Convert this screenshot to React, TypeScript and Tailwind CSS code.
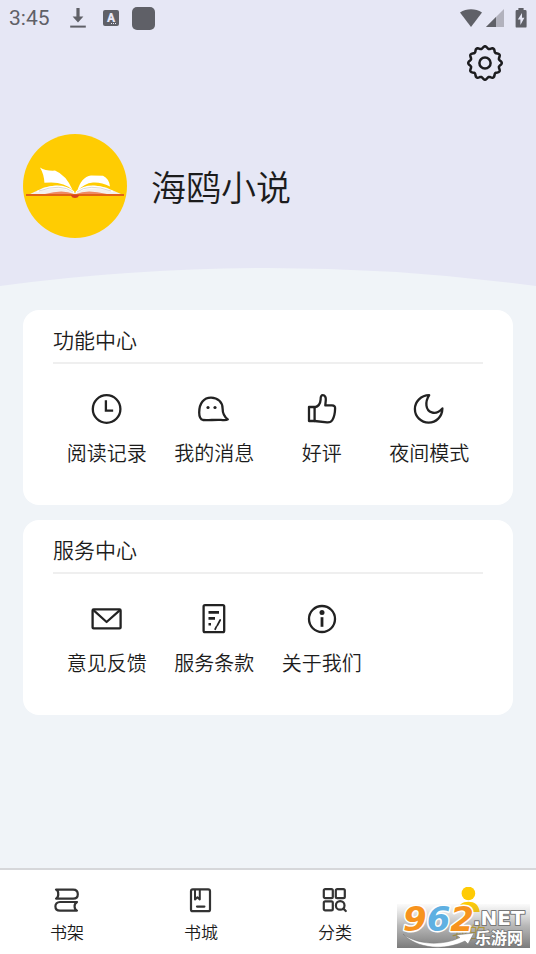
import type { ReactNode } from 'react';

type Item = { label: string; icon: ReactNode };

const iconProps = {
    viewBox: '0 0 32 32',
    fill: 'none',
    stroke: '#222',
    strokeWidth: 2.3,
    strokeLinecap: 'round',
    strokeLinejoin: 'round',
    'aria-hidden': true,
} as const;

const FEATURES: Item[] = [
    {
        label: '阅读记录',
        icon: (
            <svg {...iconProps} className="size-8">
                <circle cx="15.6" cy="16" r="13.8" />
                <path d="M14.9 8.5V17.6H21" strokeLinecap="square" strokeLinejoin="miter" />
            </svg>
        ),
    },
    {
        label: '我的消息',
        icon: (
            <svg {...iconProps} className="size-8">
                <path d="M5 27C2.4 26.4 1.2 23.5 1.2 19.5C1.2 10 6 4.6 13 4.6C20 4.6 24.6 9.5 24.6 15.5C24.6 20.5 26.6 24 29.8 26.4C28 27.8 24 27 21.5 26.8C16 26.6 9 27.6 5 27Z" />
                <circle cx="10" cy="14.5" r="1.6" fill="#222" stroke="none" />
                <circle cx="17" cy="14.5" r="1.6" fill="#222" stroke="none" />
            </svg>
        ),
    },
    {
        label: '好评',
        icon: (
            <svg {...iconProps} className="size-8">
                <path d="M3 14H8.6V28H3Z" />
                <path d="M8.6 14.4C12.4 13.4 14.4 10.5 14.6 6.6C14.6 3.6 15 2.2 16.8 2.2C19 2.2 20 4.2 19.8 7L19.3 12.4H26C28.4 12.4 29.2 13.6 29.1 15.5C29 20 28.2 24 26.4 27C25.2 29 23.6 29.6 21 29.4L8.6 28" />
            </svg>
        ),
    },
    {
        label: '夜间模式',
        icon: (
            <svg {...iconProps} className="size-8">
                <path d="M16.2 2.2C8 2.4 1.9 8.4 1.9 16C1.9 23.6 8 29.6 15.6 29.6C23.2 29.6 29.2 23.8 29.4 15.4C26.2 19 22.4 20.6 18.8 19.4C12.4 17.2 11.8 9 16.2 2.2Z" />
            </svg>
        ),
    },
];

const SERVICES: Item[] = [
    {
        label: '意见反馈',
        icon: (
            <svg {...iconProps} className="size-8">
                <rect x="1.6" y="6.4" width="28" height="19" rx="1" />
                <path d="M3 7.6L15.6 19L28.4 7.6" strokeWidth="2.2" />
            </svg>
        ),
    },
    {
        label: '服务条款',
        icon: (
            <svg {...iconProps} className="size-8">
                <rect x="5.6" y="2.2" width="20.6" height="27" rx="1.4" />
                <path d="M10.5 9.4H21M10.5 15.4H17M10.5 21.2H13" strokeWidth="2.6" strokeLinecap="butt" />
                <path d="M22.2 17L19.2 22.6M18.2 24L17.2 26.2" strokeWidth="1.8" />
            </svg>
        ),
    },
    {
        label: '关于我们',
        icon: (
            <svg {...iconProps} className="size-8">
                <circle cx="16" cy="16" r="13" />
                <circle cx="16" cy="9.6" r="2.5" fill="#222" stroke="none" />
                <path d="M16 14.2V23.8" strokeWidth="2.8" strokeLinecap="butt" />
            </svg>
        ),
    },
];

const tabIconProps = { ...iconProps, viewBox: '0 0 26 26', stroke: '#333', strokeWidth: 2.2 } as const;

const TABS: (Item & { active?: boolean })[] = [
    {
        label: '书架',
        icon: (
            <svg {...tabIconProps} className="size-[26px]">
                <path d="M2 2.6H19.2C22.2 2.6 23.8 4.6 23.8 7.2C23.8 9.8 22.2 11.6 19.2 11.6H2C3.8 10.6 4.4 9 4.2 7.2C4.4 5.2 3.8 3.4 2 2.6Z" />
                <path d="M23 15H6C3 15 1.4 16.8 1.4 19.2C1.4 21.8 3 23.6 6 23.6H23C21.2 22.6 20.6 21.2 20.6 19.4C20.4 17.8 21 16.4 23 15Z" />
            </svg>
        ),
    },
    {
        label: '书城',
        icon: (
            <svg {...tabIconProps} className="size-[26px]">
                <rect x="3" y="2.4" width="19" height="21.8" rx="1.8" />
                <path d="M7 3V12.4L9.4 10.2L11.8 12.4V3" strokeWidth="2" />
                <path d="M9 19.6H16.4" />
            </svg>
        ),
    },
    {
        label: '分类',
        icon: (
            <svg {...tabIconProps} className="size-[26px]">
                <rect x="1.8" y="2.2" width="9" height="9" rx="1.4" />
                <rect x="13.8" y="2.2" width="9" height="9" rx="1.4" />
                <rect x="1.8" y="14.4" width="9" height="9" rx="1.4" />
                <circle cx="18.2" cy="18.4" r="4.3" />
                <path d="M21.4 21.6L23.8 24" />
            </svg>
        ),
    },
    {
        label: '我的',
        active: true,
        icon: (
            <svg viewBox="0 0 26 26" className="size-[26px]" fill="#ffcb05" aria-hidden>
                <circle cx="12.4" cy="6.4" r="6.8" />
                <path d="M1.4 25C2.4 17.5 6.2 14.8 12.4 14.8C18.6 14.8 22.6 17.5 23.6 25Z" />
            </svg>
        ),
    },
];

// 12-lobed outline around the settings gear
const GEAR_PATH =
    Array.from({ length: 96 }, (_, i) => {
        const a = (i / 96) * Math.PI * 2 - Math.PI / 2;
        const r = 15.6 + 1.2 * Math.cos(((i * 12) / 96) * Math.PI * 2);
        return `${i ? 'L' : 'M'}${(18 + r * Math.cos(a)).toFixed(2)} ${(18 + r * Math.sin(a)).toFixed(2)}`;
    }).join('') + 'Z';

function StatusBar() {
    return (
        <div className="flex h-9 items-center justify-between px-[9px] text-[#5f6067]">
            <div className="flex items-center">
                <span className="w-[59px] font-[Roboto,sans-serif] text-[21px] leading-9">3:45</span>
                <svg viewBox="0 0 20 22" className="h-[22px] w-5" fill="currentColor" aria-hidden>
                    <path d="M8.4 1H11.6V9.4H15.4L10 15.4L4.6 9.4H8.4Z" />
                    <path d="M2.2 18.6H17.8V20.6H2.2Z" />
                </svg>
                <span className="relative ml-[15px] flex size-4 items-center justify-center rounded-xs bg-[#5f6067] font-[Roboto,sans-serif] text-[12px] font-black leading-4 text-[#e6e7f5]">
                    A
                    <svg viewBox="0 0 8 2" className="absolute bottom-px right-px h-[2px] w-2" fill="#e6e7f5" aria-hidden>
                        <path d="M1 0H2V1H1ZM3 0H4V1H3ZM5 0H6V1H5Z" />
                    </svg>
                </span>
                <span className="ml-[13px] size-[23px] rounded-[5px] bg-[#5f6067]" />
            </div>
            <div className="flex items-center">
                <svg viewBox="0 0 24 20" className="h-5 w-6" fill="currentColor" aria-hidden>
                    <path d="M1 4.6C7.6 .2 16.4 .2 23 4.6L12 19Z" />
                </svg>
                <svg viewBox="0 0 20 20" className="ml-0.5 h-5 w-5" aria-hidden>
                    <path d="M19 1V19H1Z" fill="#b2b2bd" />
                    <path d="M11 9V19H1Z" fill="#5f6067" />
                </svg>
                <svg viewBox="0 0 12 20" className="ml-2.5 h-5 w-3" aria-hidden>
                    <path d="M3.4 0H8.6V2H10.2Q11.6 2 11.6 3.4V18.4Q11.6 19.6 10.2 19.6H1.8Q.6 19.6 .6 18.4V3.4Q.6 2 1.8 2H3.4Z" fill="#5f6067" />
                    <path d="M7 5L2.8 11.6H5.4V17L9.4 9.8H7Z" fill="#e6e7f5" />
                </svg>
            </div>
        </div>
    );
}

function Avatar() {
    return (
        <svg viewBox="0 0 104 104" className="size-[104px] shrink-0" aria-hidden>
            <circle cx="52" cy="52" r="52" fill="#ffcc02" />
            <path d="M7 60L21 53.5Q40 48 52 59Q64 48 83 53.5L98 60Z" fill="#f4f1ee" />
            <path d="M22 60Q40 55 51 60ZM84 60Q64 55 53 60Z" fill="#ef8a63" />
            <path d="M14 57.6Q38 49.6 51 59M18 56Q38 47.6 51 58M90 57.6Q66 49.6 53 59M86 56Q66 47.6 53 58" fill="none" stroke="#fff" strokeWidth="1.4" />
            <path d="M16 57Q38 49 50 58M88 57Q66 49 54 58" fill="none" stroke="#b8b2b0" strokeWidth=".5" />
            <path d="M17 33.4Q23 37.2 32 36.6Q43 41 49.6 56Q40 46.6 21.4 48.8Q21 40 17 33.4Z" fill="#fff" />
            <path d="M54 57.6Q58 43 68 41.4L80 41.8Q86 44.6 87 52.4Q78 48 70 48.6Q61 49.4 54 57.6Z" fill="#fff" />
            <path d="M3 60.2H101V61.8H56Q55 64 52 64Q49 64 48 61.8H3Z" fill="#d8401f" />
        </svg>
    );
}

function Card({ title, items }: { title: string; items: Item[] }) {
    return (
        <section className="rounded-2xl bg-white px-[30px] pb-[38px] pt-[13px]">
            <h2 className="border-b-2 border-[#efefef] pb-[7px] text-[21px] font-[350] leading-8">{title}</h2>
            <div className="grid grid-cols-4 pt-[29px]">
                {items.map(item => (
                    <button key={item.label} type="button" className="flex flex-col items-center gap-3.5">
                        {item.icon}
                        <span className="whitespace-nowrap text-[20px] font-[350] leading-7">{item.label}</span>
                    </button>
                ))}
            </div>
        </section>
    );
}

function Watermark() {
    return (
        <svg
            viewBox="0 0 133 44"
            className="pointer-events-none absolute bottom-1.5 right-1.5 h-11 w-[133px] overflow-visible"
        >
            <defs>
                <linearGradient id="shade" x1="0" y1="0" x2="0" y2="1">
                    <stop offset="0" stopColor="#8c8c8c" stopOpacity=".04" />
                    <stop offset=".5" stopColor="#6e6e6e" stopOpacity=".5" />
                    <stop offset="1" stopColor="#5a5a5a" stopOpacity=".8" />
                </linearGradient>
            </defs>
            <rect width="133" height="44" fill="url(#shade)" />
            <path
                d="M6 30C20 41 46 42 63 33.5L59 31L77 29L71 40L68 37C48 47 20 45 6 30Z"
                fill="#fff"
                stroke="#777"
                strokeWidth=".5"
            />
            <g fontFamily="'DejaVu Sans', sans-serif" fontWeight="700" paintOrder="stroke" strokeLinejoin="round">
                <text x="6" y="27" fontSize="34" fontStyle="italic" stroke="#fff" strokeWidth="3">
                    <tspan fill="#f7931e">9</tspan>
                    <tspan fill="#5fb0e2">6</tspan>
                    <tspan fill="#f7931e">2</tspan>
                </text>
                <text x="76" y="21" fontSize="20" fill="#fff" stroke="#777" strokeWidth="2">.NET</text>
            </g>
            <text
                x="78"
                y="40"
                fontSize="16"
                fontWeight="700"
                fill="#fff"
                stroke="#777"
                strokeWidth="1.5"
                paintOrder="stroke"
                fontFamily="'Noto Sans CJK SC', sans-serif"
            >
                乐游网
            </text>
        </svg>
    );
}

export default function App() {
    return (
        <div className="flex min-h-screen flex-col bg-[#f0f4f8] font-['Noto_Sans_CJK_SC',sans-serif] text-[#1c1c1c]">
            <header className="bg-[#e6e7f5]">
                <StatusBar />
                <div className="flex justify-end pr-[33px] pt-[9px]">
                    <button type="button" aria-label="设置">
                        <svg viewBox="0 0 36 36" className="size-9" fill="none" stroke="#1c1c1f" strokeWidth="2.5" aria-hidden>
                            <path d={GEAR_PATH} strokeLinejoin="round" />
                            <circle cx="18" cy="18" r="5.6" />
                        </svg>
                    </button>
                </div>
                <div className="flex items-center gap-6 px-[23px] pb-[30px] pt-[53px]">
                    <Avatar />
                    <h1 className="text-[35px] font-[350] leading-[48px]">海鸥小说</h1>
                </div>
                <svg viewBox="0 0 536 18" preserveAspectRatio="none" className="block h-[18px] w-full" aria-hidden>
                    <path d="M0 18Q268 -18 536 18Z" fill="#f0f4f8" />
                </svg>
            </header>

            <main className="flex flex-1 flex-col gap-[15px] px-[23px] py-6">
                <Card title="功能中心" items={FEATURES} />
                <Card title="服务中心" items={SERVICES} />
            </main>

            <nav className="relative grid grid-cols-4 border-t-2 border-[#d6d7da] bg-white pb-2.5 pt-[17px]">
                {TABS.map(tab => (
                    <a
                        key={tab.label}
                        href="#"
                        aria-current={tab.active ? 'page' : undefined}
                        className="flex flex-col items-center gap-[7px] aria-[current=page]:text-[#ffcb05]"
                    >
                        {tab.icon}
                        <span className="text-[17px] font-[350] leading-6">{tab.label}</span>
                    </a>
                ))}
                <Watermark />
            </nav>
        </div>
    );
}
